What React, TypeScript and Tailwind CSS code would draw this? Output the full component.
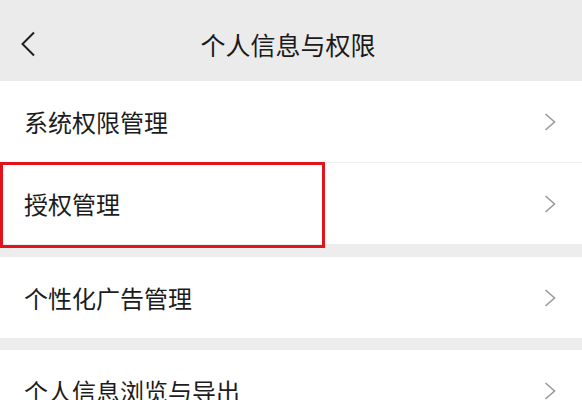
import React from "react";

const font = { fontFamily: '"Noto Sans CJK SC", "Noto Sans", sans-serif' };

function Chevron() {
  return (
    <svg width="12" height="18" viewBox="0 0 12 18" className="shrink-0">
      <path d="M1.5 1 L10.5 9 L1.5 17" fill="none" stroke="#9b9b9b" strokeWidth="1.6" />
    </svg>
  );
}

function Row({ label, children }: { label: string; children?: React.ReactNode }) {
  return (
    <div className="relative flex h-[81px] items-center justify-between bg-white pl-[24px] pr-[26px]">
      <span className="text-[24px] leading-none text-[#1c1c1c]">{label}</span>
      <Chevron />
      {children}
    </div>
  );
}

export default function App() {
  return (
    <div className="h-[400px] w-[582px] overflow-hidden bg-[#ededed]" style={font}>
      <div className="relative flex h-[81px] items-center justify-center bg-[#ebebeb] pt-[8px]">
        <svg width="16" height="26" viewBox="0 0 16 26" className="absolute left-[20px] top-[31px]">
          <path d="M14 1.5 L2.5 13 L14 24.5" fill="none" stroke="#1f1f1f" strokeWidth="2" />
        </svg>
        <span className="ml-[-6px] text-[25px] leading-none text-[#1a1a1a]">个人信息与权限</span>
      </div>
      <Row label="系统权限管理" />
      <div className="h-px bg-[#efefef]" />
      <Row label="授权管理">
        <div className="absolute left-0 top-[-1px] h-[86px] w-[325px] border-[3px] border-[#e3131b]" />
      </Row>
      <div className="h-[13px]" />
      <Row label="个性化广告管理" />
      <div className="h-[12px]" />
      <Row label="个人信息浏览与导出" />
    </div>
  );
}
